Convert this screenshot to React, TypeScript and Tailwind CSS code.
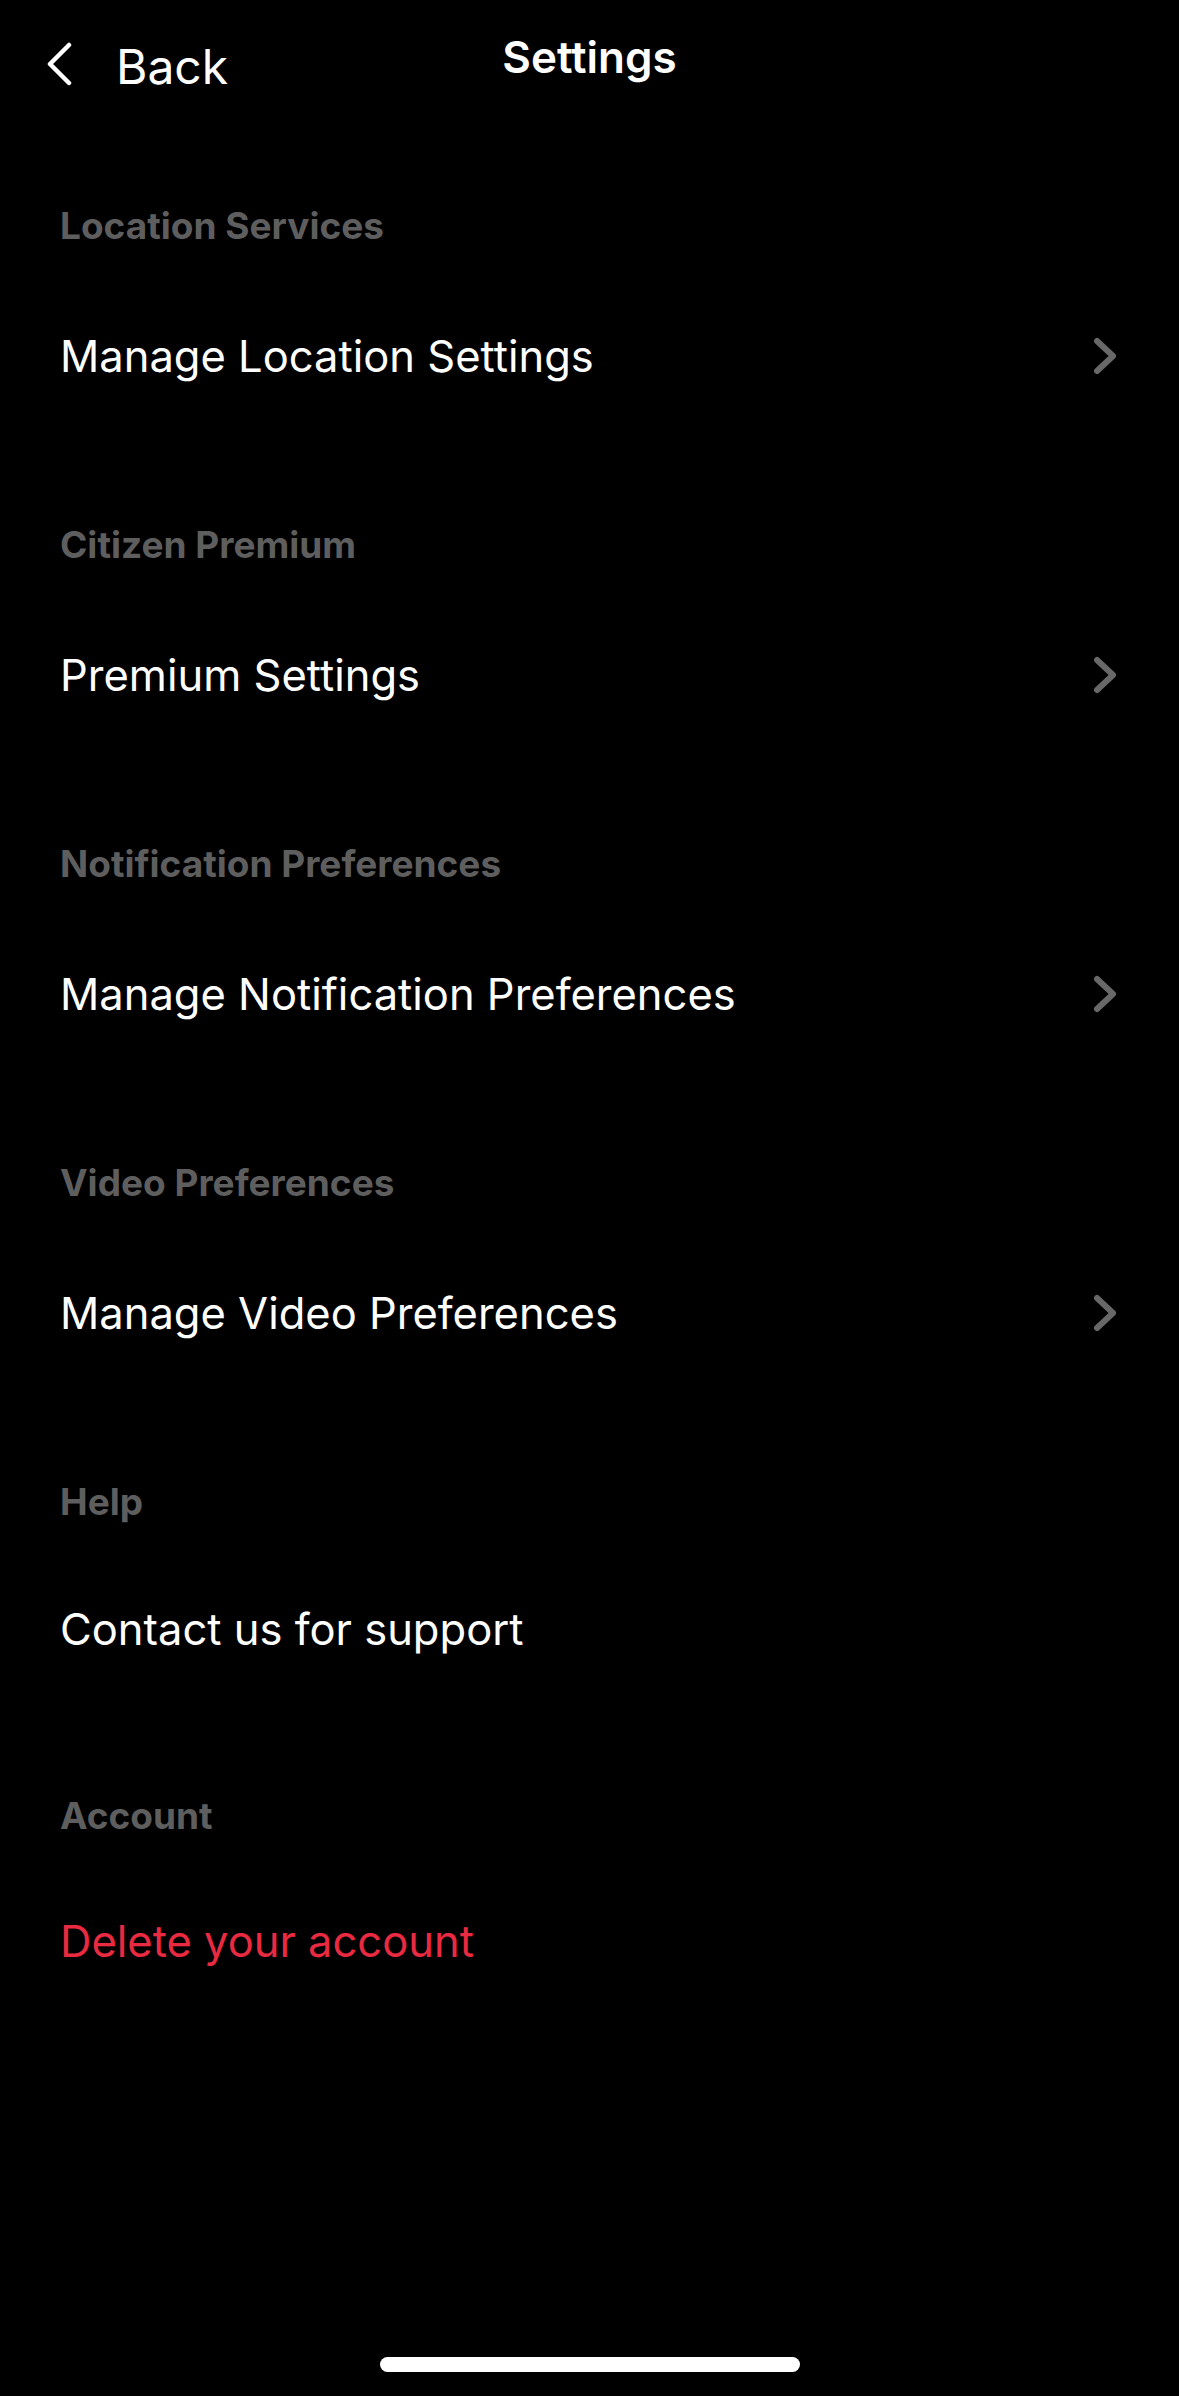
type Row = {
    section: string
    label: string
    chevron?: boolean
    danger?: boolean
    gapTop: string
    gapRow: string
}

const rows: Row[] = [
    { section: 'Location Services', label: 'Manage Location Settings', chevron: true, gapTop: 'pt-[115px]', gapRow: 'mt-[90px]' },
    { section: 'Citizen Premium', label: 'Premium Settings', chevron: true, gapTop: 'pt-[148px]', gapRow: 'mt-[90px]' },
    { section: 'Notification Preferences', label: 'Manage Notification Preferences', chevron: true, gapTop: 'pt-[148px]', gapRow: 'mt-[90px]' },
    { section: 'Video Preferences', label: 'Manage Video Preferences', chevron: true, gapTop: 'pt-[148px]', gapRow: 'mt-[90px]' },
    { section: 'Help', label: 'Contact us for support', gapTop: 'pt-[148px]', gapRow: 'mt-[87px]' },
    { section: 'Account', label: 'Delete your account', danger: true, gapTop: 'pt-[146px]', gapRow: 'mt-[85px]' },
]

function Chevron() {
    return (
        <svg width="24" height="38" viewBox="0 0 24 38" fill="none" aria-hidden="true">
            <polyline
                points="4,4 20,19 4,34"
                stroke="#686868"
                strokeWidth="6"
                strokeLinecap="round"
                strokeLinejoin="round"
            />
        </svg>
    )
}

export default function App() {
    return (
        <div className="flex flex-col w-[1179px] h-[2396px] bg-black text-white font-['Inter','Liberation_Sans',sans-serif] overflow-hidden">
            {/* Nav bar */}
            <header className="grid grid-cols-[1fr_auto_1fr] h-[92px]">
                <button className="flex items-start gap-[43px] pl-[45px] pt-[43px] text-left">
                    <svg width="28" height="44" viewBox="0 0 28 44" fill="none" className="-mt-[1px]" aria-hidden="true">
                        <polyline
                            points="24,3 5,22 24,41"
                            stroke="white"
                            strokeWidth="4.5"
                            strokeLinecap="round"
                            strokeLinejoin="round"
                        />
                    </svg>
                    <span className="text-[48px] leading-[48px]">Back</span>
                </button>
                <h1 className="pt-[35px] text-[44px] leading-[44px] font-semibold">Settings</h1>
                <div />
            </header>

            {/* Sections */}
            <main className="flex flex-col pl-[60px] pr-[62px]">
                {rows.map((row) => (
                    <section key={row.section} className={row.gapTop}>
                        <h2 className="text-[37px] leading-[37px] font-bold text-[#5e5e5e]">{row.section}</h2>
                        <div className={`flex items-center justify-between ${row.gapRow}`}>
                            <span
                                className={`text-[43.5px] leading-[44px] ${row.danger ? 'text-[#ea2a40]' : 'text-white'}`}
                            >
                                {row.label}
                            </span>
                            {row.chevron && <Chevron />}
                        </div>
                    </section>
                ))}
            </main>

            <div className="flex-1" />

            {/* Home indicator */}
            <div className="flex justify-center pb-[24px]">
                <div className="w-[420px] h-[15px] rounded-full bg-white" />
            </div>
        </div>
    )
}
